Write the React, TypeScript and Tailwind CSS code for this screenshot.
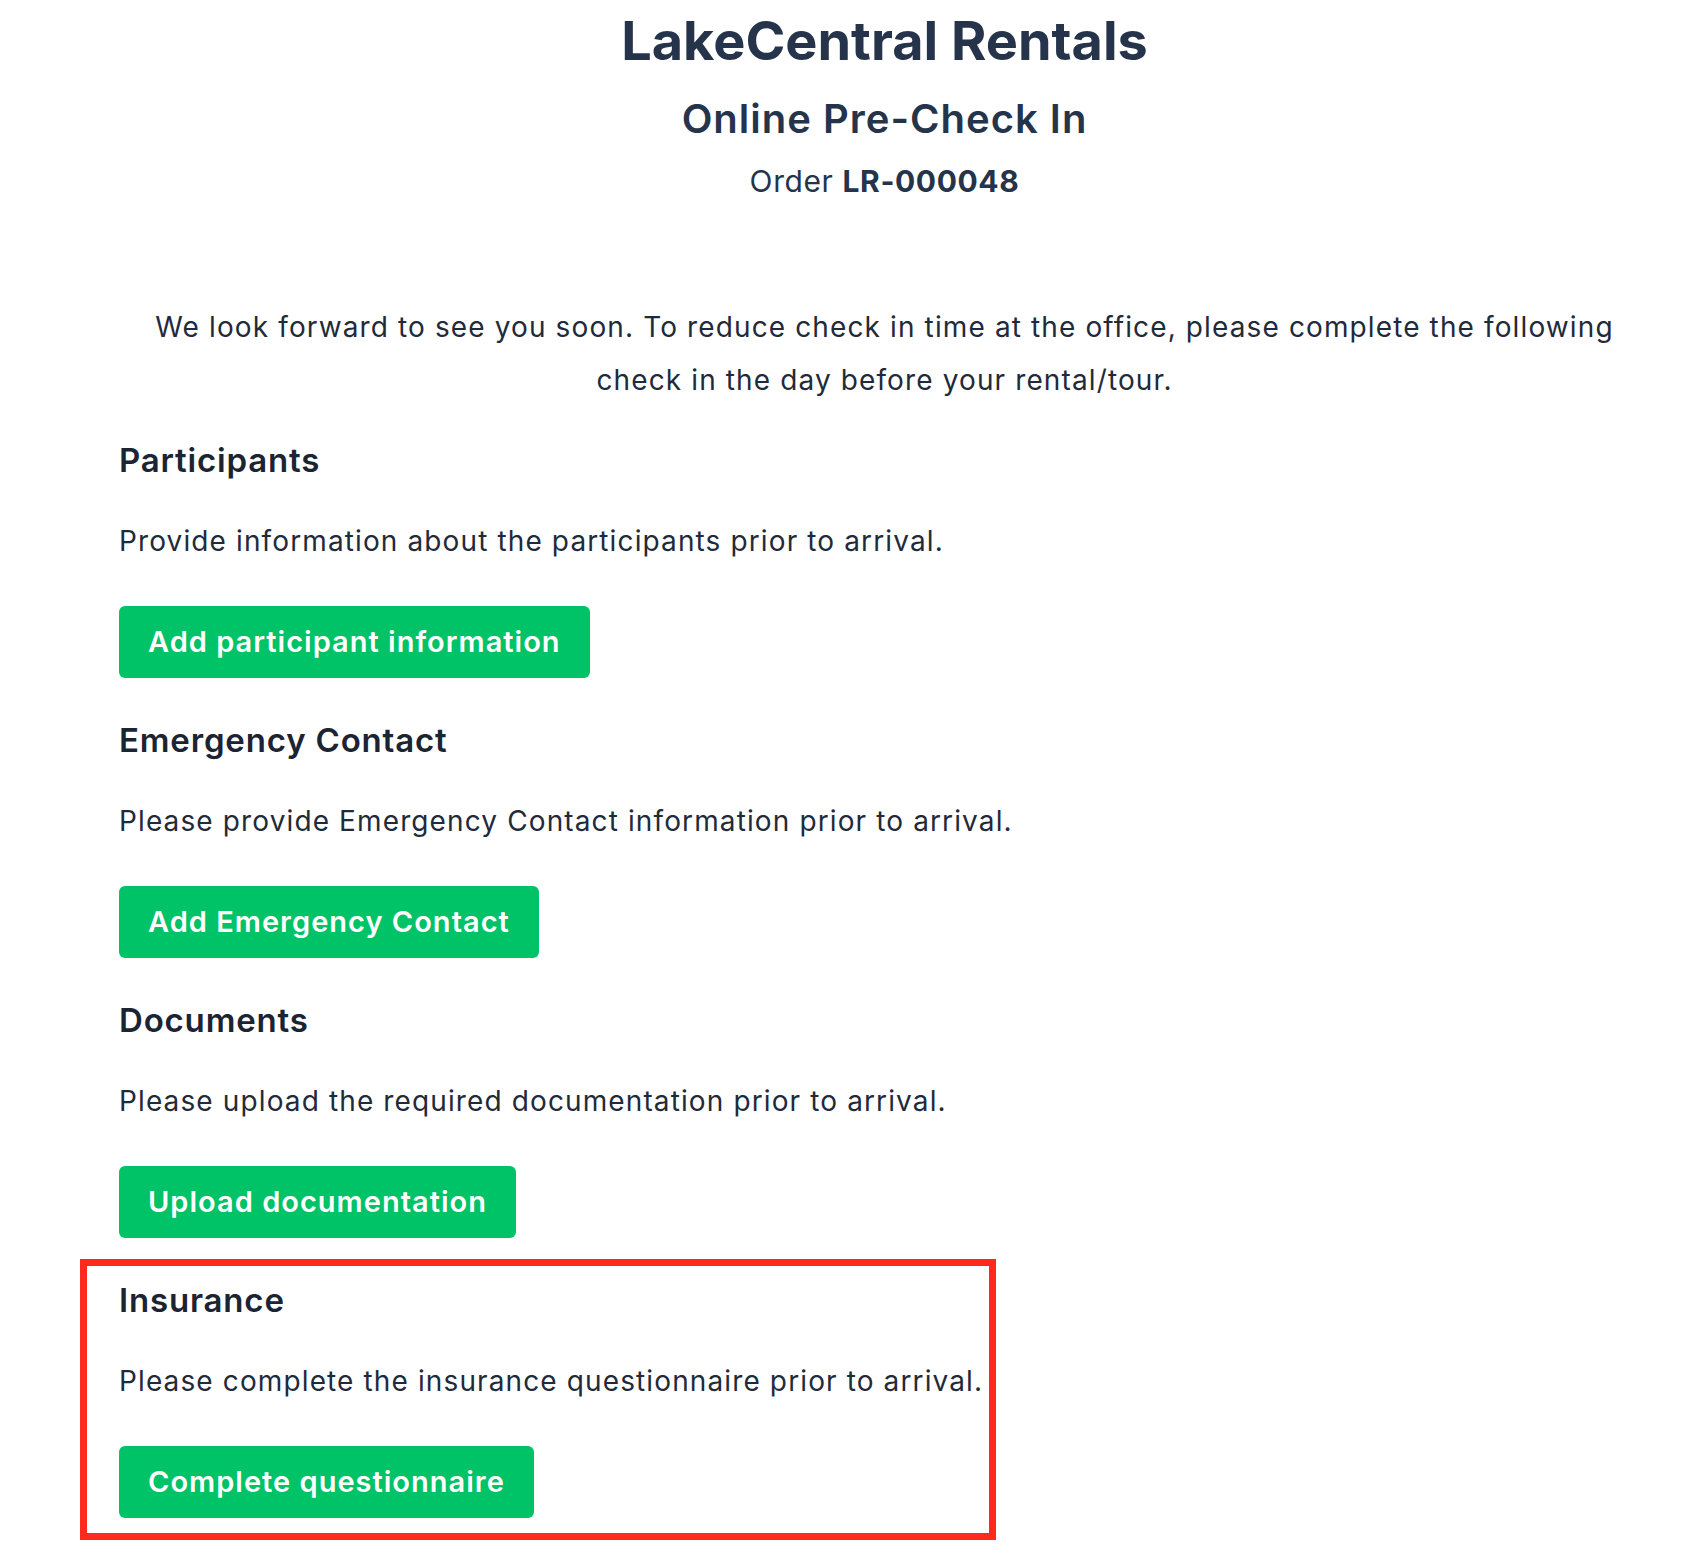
const sections = [
  {
    title: 'Participants',
    text: 'Provide information about the participants prior to arrival.',
    action: 'Add participant information',
  },
  {
    title: 'Emergency Contact',
    text: 'Please provide Emergency Contact information prior to arrival.',
    action: 'Add Emergency Contact',
  },
  {
    title: 'Documents',
    text: 'Please upload the required documentation prior to arrival.',
    action: 'Upload documentation',
  },
];

function Section({ title, text, action }: { title: string; text: string; action: string }) {
  return (
    <div>
      <h3 className="text-[33px] font-semibold leading-[40px] tracking-[0.025em] text-[#1b2433]">{title}</h3>
      <p className="mt-[41px] text-[28px] leading-[40px] tracking-[0.04em] text-[#1f2a3a]">{text}</p>
      <button className="mt-[45px] h-[72px] rounded-[6px] bg-[#00c266] px-[29px] text-[29px] font-semibold tracking-[0.035em] text-white">
        {action}
      </button>
    </div>
  );
}

export default function App() {
  return (
    <div
      className="min-h-[1560px] bg-white pl-[119px] pr-[46px] pt-[9px]"
      style={{ fontFamily: 'Inter, "Noto Sans", sans-serif' }}
    >
      {/* Header */}
      <div className="text-center text-[#25344a]">
        <h1 className="text-[54px] font-bold leading-[64px]">LakeCentral Rentals</h1>
        <h2 className="mt-[22px] text-[40px] font-semibold leading-[48px] tracking-[0.025em]">Online Pre-Check In</h2>
        <div className="mt-[18px] text-[30px] leading-[40px] tracking-[0.02em]">
          Order <span className="font-bold">LR-000048</span>
        </div>
      </div>

      <p className="mt-[100px] text-center text-[28px] leading-[53px] tracking-[0.04em] text-[#1f2a3a]">
        We look forward to see you soon. To reduce check in time at the office, please complete the following
        check in the day before your rental/tour.
      </p>

      <div className="mt-[33px] flex flex-col gap-[42px]">
        {sections.map((s) => (
          <Section key={s.title} {...s} />
        ))}
      </div>

      {/* Highlighted section */}
      <div className="ml-[-39px] mt-[21px] w-[916px] border-[7px] border-[#fe2b1c] pb-[15px] pl-[32px] pt-[14px]">
        <Section
          title="Insurance"
          text="Please complete the insurance questionnaire prior to arrival."
          action="Complete questionnaire"
        />
      </div>
    </div>
  );
}
